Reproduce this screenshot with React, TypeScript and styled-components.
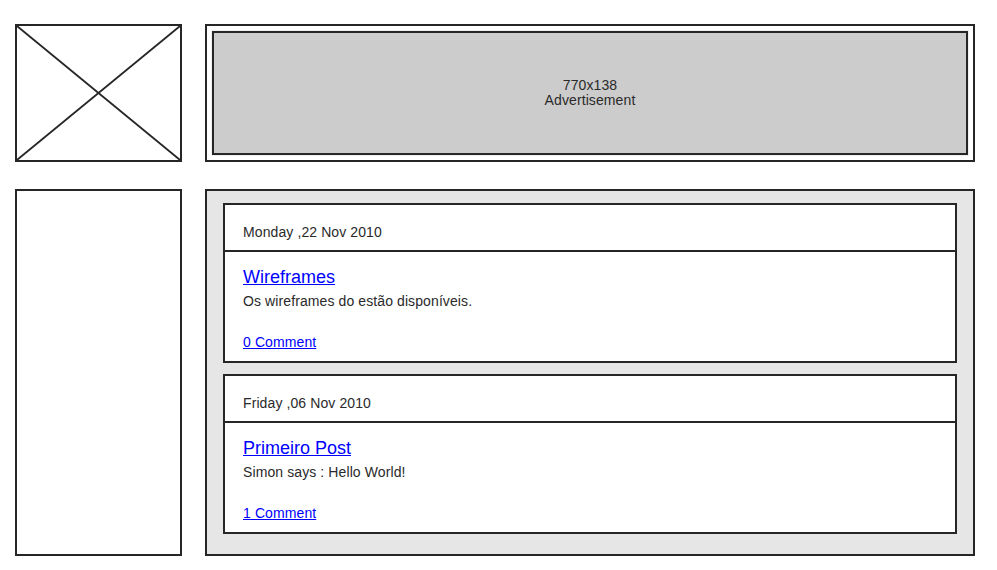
import React from 'react';
import styled, { createGlobalStyle } from 'styled-components';

type Post = {
  date: string;
  title: string;
  excerpt: string;
  comments: number;
};

const posts: Post[] = [
  {
    date: 'Monday ,22 Nov 2010',
    title: 'Wireframes',
    excerpt: 'Os wireframes do estão disponíveis.',
    comments: 0,
  },
  {
    date: 'Friday ,06 Nov 2010',
    title: 'Primeiro Post',
    excerpt: 'Simon says : Hello World!',
    comments: 1,
  },
];

const GlobalStyle = createGlobalStyle`
  html, body {
    margin: 0;
    padding: 0;
    background: #fff;
  }
  body {
    font-family: 'Liberation Sans', Arial, sans-serif;
    color: #2a2a2a;
  }
`;

const Page = styled.div`
  display: grid;
  grid-template-columns: 167px 770px;
  grid-template-rows: 138px 367px;
  column-gap: 23px;
  row-gap: 27px;
  padding: 24px 0 0 15px;
`;

const Box = styled.div`
  box-sizing: border-box;
  border: 2px solid #262626;
  background: #fff;
`;

const Logo = styled(Box)`
  svg {
    display: block;
    width: 100%;
    height: 100%;
  }
`;

const AdFrame = styled(Box)`
  padding: 5px;
  display: flex;
`;

const AdInner = styled.div`
  flex: 1;
  box-sizing: border-box;
  border: 2px solid #262626;
  background: #cccccc;
  box-shadow: 0 0 0 1px #eeeeee;
  display: flex;
  flex-direction: column;
  align-items: center;
  justify-content: center;
  font-size: 14px;
  line-height: 15px;
  letter-spacing: 0.1px;
  padding-bottom: 1px;
`;

const Sidebar = styled(Box)``;

const Content = styled(Box)`
  background: #e6e6e6;
  padding: 12px 16px 0;
  display: flex;
  flex-direction: column;
  gap: 11px;
`;

const Card = styled.article`
  box-sizing: border-box;
  border: 2px solid #262626;
  background: #fff;
`;

const CardHeader = styled.header`
  box-sizing: border-box;
  height: 47px;
  padding: 19px 18px 0;
  border-bottom: 2px solid #262626;
  font-size: 14px;
  line-height: 16px;
  letter-spacing: 0.1px;
`;

const CardBody = styled.div`
  padding: 15px 18px 11px;
  display: flex;
  flex-direction: column;
  align-items: flex-start;
`;

const Title = styled.a`
  font-size: 18px;
  line-height: 20px;
  color: #0000ff;
  text-decoration: underline;
`;

const Excerpt = styled.p`
  margin: 6px 0 0;
  font-size: 14px;
  line-height: 16px;
  letter-spacing: 0.1px;
`;

const CommentLink = styled.a`
  margin-top: 25px;
  font-size: 14px;
  line-height: 16px;
  letter-spacing: 0.1px;
  color: #0000ff;
  text-decoration: underline;
`;

const App = () => (
  <>
    <GlobalStyle />
    <Page>
      <Logo>
        <svg viewBox="0 0 100 100" preserveAspectRatio="none">
          <line x1="0" y1="0" x2="100" y2="100" stroke="#262626" strokeWidth="1.8" vectorEffect="non-scaling-stroke" />
          <line x1="100" y1="0" x2="0" y2="100" stroke="#262626" strokeWidth="1.8" vectorEffect="non-scaling-stroke" />
        </svg>
      </Logo>
      <AdFrame>
        <AdInner>
          <span>770x138</span>
          <span>Advertisement</span>
        </AdInner>
      </AdFrame>
      <Sidebar />
      <Content>
        {posts.map((post) => (
          <Card key={post.title}>
            <CardHeader>{post.date}</CardHeader>
            <CardBody>
              <Title href="#">{post.title}</Title>
              <Excerpt>{post.excerpt}</Excerpt>
              <CommentLink href="#">{post.comments} Comment</CommentLink>
            </CardBody>
          </Card>
        ))}
      </Content>
    </Page>
  </>
);

export default App;
